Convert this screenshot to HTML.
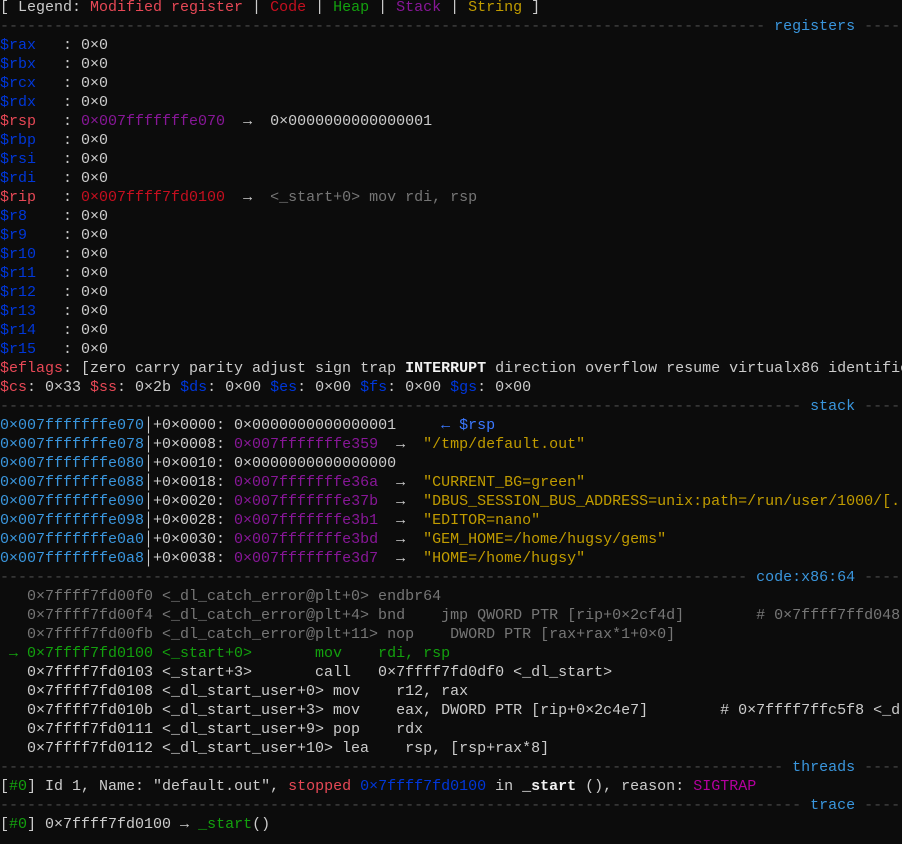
<!DOCTYPE html>
<html><head><meta charset="utf-8"><style>
html,body{margin:0;padding:0;background:#0c0c0c;}
body{width:902px;height:844px;overflow:hidden;position:relative;}
pre{margin:0;padding:0;position:relative;top:-2px;width:902px;overflow:hidden;font-family:"Liberation Mono","DejaVu Sans Mono",monospace;font-size:15px;line-height:19px;color:#cccccc;white-space:pre;}
.d{color:#4a4a4a}.t{color:#3a96dd}.b{color:#0037da}.r{color:#e74856}.cr{color:#c50f1f}
.g{color:#13a10e}.p{color:#881798}.y{color:#c19c00}.gr{color:#767676}.c{color:#3a96dd}
.bb{color:#3b78ff}.m{color:#b4009e}.w{color:#f2f2f2;font-weight:bold}
</style></head><body><pre>[ Legend: <span class="r">Modified register</span> | <span class="cr">Code</span> | <span class="g">Heap</span> | <span class="p">Stack</span> | <span class="y">String</span> ]
<span class="d">------------------------------------------------------------------------------------- </span><span class="t">registers</span><span class="d"> -----</span>
<span class="b">$rax</span>   : 0×0
<span class="b">$rbx</span>   : 0×0
<span class="b">$rcx</span>   : 0×0
<span class="b">$rdx</span>   : 0×0
<span class="r">$rsp</span>   : <span class="p">0×007fffffffe070</span>  →  0×0000000000000001
<span class="b">$rbp</span>   : 0×0
<span class="b">$rsi</span>   : 0×0
<span class="b">$rdi</span>   : 0×0
<span class="r">$rip</span>   : <span class="cr">0×007ffff7fd0100</span>  →  <span class="gr">&lt;_start+0&gt; mov rdi, rsp</span>
<span class="b">$r8 </span>   : 0×0
<span class="b">$r9 </span>   : 0×0
<span class="b">$r10</span>   : 0×0
<span class="b">$r11</span>   : 0×0
<span class="b">$r12</span>   : 0×0
<span class="b">$r13</span>   : 0×0
<span class="b">$r14</span>   : 0×0
<span class="b">$r15</span>   : 0×0
<span class="r">$eflags</span>: [zero carry parity adjust sign trap <span class="w">INTERRUPT</span> direction overflow resume virtualx86 identification]
<span class="r">$cs</span>: 0×33 <span class="r">$ss</span>: 0×2b <span class="b">$ds</span>: 0×00 <span class="b">$es</span>: 0×00 <span class="b">$fs</span>: 0×00 <span class="b">$gs</span>: 0×00
<span class="d">----------------------------------------------------------------------------------------- </span><span class="t">stack</span><span class="d"> -----</span>
<span class="c">0×007fffffffe070</span>│+0×0000: 0×0000000000000001     <span class="bb">← $rsp</span>
<span class="c">0×007fffffffe078</span>│+0×0008: <span class="p">0×007fffffffe359</span>  →  <span class="y">"/tmp/default.out"</span>
<span class="c">0×007fffffffe080</span>│+0×0010: 0×0000000000000000
<span class="c">0×007fffffffe088</span>│+0×0018: <span class="p">0×007fffffffe36a</span>  →  <span class="y">"CURRENT_BG=green"</span>
<span class="c">0×007fffffffe090</span>│+0×0020: <span class="p">0×007fffffffe37b</span>  →  <span class="y">"DBUS_SESSION_BUS_ADDRESS=unix:path=/run/user/1000/[...]"</span>
<span class="c">0×007fffffffe098</span>│+0×0028: <span class="p">0×007fffffffe3b1</span>  →  <span class="y">"EDITOR=nano"</span>
<span class="c">0×007fffffffe0a0</span>│+0×0030: <span class="p">0×007fffffffe3bd</span>  →  <span class="y">"GEM_HOME=/home/hugsy/gems"</span>
<span class="c">0×007fffffffe0a8</span>│+0×0038: <span class="p">0×007fffffffe3d7</span>  →  <span class="y">"HOME=/home/hugsy"</span>
<span class="d">----------------------------------------------------------------------------------- </span><span class="t">code:x86:64</span><span class="d"> -----</span>
<span class="gr">   0×7ffff7fd00f0 &lt;_dl_catch_error@plt+0&gt; endbr64</span>
<span class="gr">   0×7ffff7fd00f4 &lt;_dl_catch_error@plt+4&gt; bnd    jmp QWORD PTR [rip+0×2cf4d]        # 0×7ffff7ffd048 &lt;_dl_catch_error@got.plt&gt;</span>
<span class="gr">   0×7ffff7fd00fb &lt;_dl_catch_error@plt+11&gt; nop    DWORD PTR [rax+rax*1+0×0]</span>
<span class="g"> → 0×7ffff7fd0100 &lt;_start+0&gt;       mov    rdi, rsp</span>
   0×7ffff7fd0103 &lt;_start+3&gt;       call   0×7ffff7fd0df0 &lt;_dl_start&gt;
   0×7ffff7fd0108 &lt;_dl_start_user+0&gt; mov    r12, rax
   0×7ffff7fd010b &lt;_dl_start_user+3&gt; mov    eax, DWORD PTR [rip+0×2c4e7]        # 0×7ffff7ffc5f8 &lt;_dl_skip_args&gt;
   0×7ffff7fd0111 &lt;_dl_start_user+9&gt; pop    rdx
   0×7ffff7fd0112 &lt;_dl_start_user+10&gt; lea    rsp, [rsp+rax*8]
<span class="d">--------------------------------------------------------------------------------------- </span><span class="t">threads</span><span class="d"> -----</span>
[<span class="g">#0</span>] Id 1, Name: "default.out", <span class="r">stopped</span> <span class="b">0×7ffff7fd0100</span> in <span class="w">_start</span> (), reason: <span class="m">SIGTRAP</span>
<span class="d">----------------------------------------------------------------------------------------- </span><span class="t">trace</span><span class="d"> -----</span>
[<span class="g">#0</span>] 0×7ffff7fd0100 → <span class="g">_start</span>()
</pre></body></html>
